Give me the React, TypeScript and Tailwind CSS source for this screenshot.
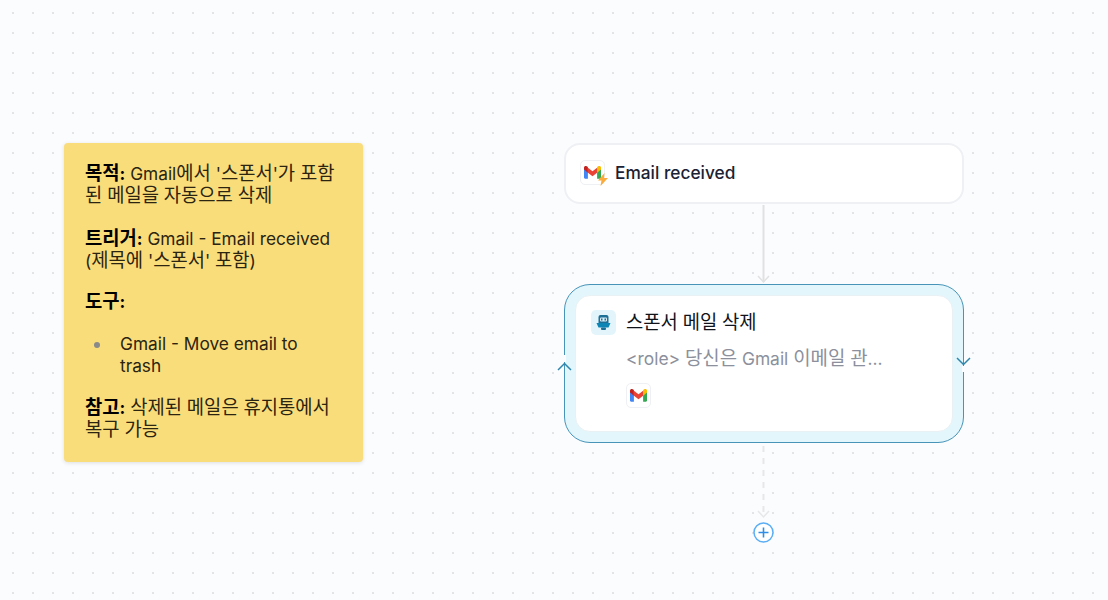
const fontStack = "font-['Inter','Noto_Sans_CJK_KR',sans-serif]";

// hangul runs are set a bit larger so each glyph gets the wider advance seen in the picture
function Ko({ text }: { text: string }) {
  return (
    <>
      {text.split(/([가-힣]+)/).map((part, i) =>
        /[가-힣]/.test(part) ? (
          <span key={i} className="text-[1.085em] leading-none">
            {part}
          </span>
        ) : (
          part
        ),
      )}
    </>
  );
}

function GmailMark({ size = 18 }: { size?: number }) {
  return (
    <svg width={size} height={size * 0.75} viewBox="0 0 24 18">
      <path d="M0 3.5V16.4C0 17.3.7 18 1.6 18H5.5V8.5Z" fill="#4285f4" />
      <path d="M18.5 18H22.4C23.3 18 24 17.3 24 16.4V3.5L18.5 8.5Z" fill="#34a853" />
      <path d="M18.5 1.5V9.5L24 5V2.4C24 .4 21.8-.7 20.2.5Z" fill="#fbbc04" />
      <path d="M5.5 9.5V2.5L12 7.4L18.5 2.5V9.5L12 14.4Z" fill="#ea4335" />
      <path d="M0 2.4V5L5.5 9.5V1.5L3.8.5C2.2-.7 0 .4 0 2.4Z" fill="#c5221f" />
    </svg>
  );
}

function IconBox({ children, tinted }: { children: React.ReactNode; tinted?: boolean }) {
  return (
    <div
      className={
        tinted
          ? "flex h-[25px] w-[25px] shrink-0 items-center justify-center rounded-[5px] bg-[#e3f5fb]"
          : "flex h-[25px] w-[25px] shrink-0 items-center justify-center rounded-[5px] border border-[#eef0f3] bg-white"
      }
    >
      {children}
    </div>
  );
}

function RobotIcon() {
  return (
    <svg width="15" height="17" viewBox="0 0 15 17">
      <rect x="2.5" y="1" width="10" height="10" rx="2" fill="#1d6f96" />
      <rect x="4" y="3.5" width="7" height="4" rx="1" fill="#d9eef6" />
      <rect x="5" y="4.5" width="1.5" height="2" fill="#1d6f96" />
      <rect x="8.5" y="4.5" width="1.5" height="2" fill="#1d6f96" />
      <path d="M0.5 9H14.5L12.5 13.5H2.5Z" fill="#0e86b5" />
      <rect x="5" y="13.5" width="5" height="2.5" rx="1" fill="#1d6f96" />
    </svg>
  );
}

function Chevron({ up }: { up?: boolean }) {
  return (
    <svg width="15" height="9" viewBox="0 0 15 9" fill="none" stroke="#2f86ad" strokeWidth="1.5">
      <path d={up ? "M1 8L7.5 1.5L14 8" : "M1 1L7.5 7.5L14 1"} />
    </svg>
  );
}

function StickyNote() {
  return (
    <div className="absolute left-[64px] top-[143px] h-[319px] w-[299px] rounded-[4px] bg-[#fadd7b] px-[21px] py-[20px] text-[17.3px] leading-[22px] text-[#2a2410] shadow-[0_1px_4px_rgba(0,0,0,0.12)]">
      <p>
        <strong className="font-bold text-black">
          <Ko text="목적:" />
        </strong>{" "}
        <Ko text="Gmail에서 '스폰서'가 포함된 메일을 자동으로 삭제" />
      </p>
      <p className="mt-[21px]">
        <strong className="font-bold text-black">
          <Ko text="트리거:" />
        </strong>{" "}
        <Ko text="Gmail - Email received (제목에 '스폰서' 포함)" />
      </p>
      <p className="mt-[19px]">
        <strong className="font-bold text-black">
          <Ko text="도구:" />
        </strong>
      </p>
      <ul className="mt-[20px] flex flex-col">
        <li className="flex items-start pl-[9px]">
          <span className="mt-[9px] h-[6px] w-[6px] shrink-0 rounded-full bg-[#8a8a8a]" />
          <span className="pl-[20px] pr-[24px]">Gmail - Move email to trash</span>
        </li>
      </ul>
      <p className="mt-[20px]">
        <strong className="font-bold text-black">
          <Ko text="참고:" />
        </strong>{" "}
        <Ko text="삭제된 메일은 휴지통에서 복구 가능" />
      </p>
    </div>
  );
}

function TriggerNode() {
  return (
    <div className="absolute left-[564px] top-[143px] flex h-[61px] w-[400px] items-center gap-[10px] rounded-[16px] border-2 border-[#eef0f4] bg-white pb-[2px] pl-[14px]">
      <div className="relative">
        <IconBox>
          <GmailMark size={17} />
        </IconBox>
        <svg className="absolute -bottom-[1px] -right-[3px]" width="10" height="13" viewBox="0 0 10 13">
          <path d="M6.5 0L0 7.5H3.5L2.5 13L10 5H6Z" fill="#fbab3c" />
        </svg>
      </div>
      <span className="text-[17.3px] font-medium leading-none text-[#1a2233]">Email received</span>
    </div>
  );
}

function AgentNode() {
  return (
    <div className="absolute left-[564px] top-[284px] h-[159px] w-[400px] rounded-[26px] border border-[#4794b8] bg-[#e3f6fc] p-[10px]">
      <div className="h-full rounded-[15px] border border-[#eaf1f4] bg-white pl-[15px] pt-[14px]">
        <div className="flex items-center gap-[10px]">
          <IconBox tinted>
            <RobotIcon />
          </IconBox>
          <span className="pt-[2px] text-[17.3px] leading-none text-[#10131a]">
            <Ko text="스폰서 메일 삭제" />
          </span>
        </div>
        <div className="mt-[12px] pl-[35px] text-[17.4px] leading-[24px] text-[#8b909c]">
          <Ko text="<role> 당신은 Gmail 이메일 관..." />
        </div>
        <div className="mt-[12px] pl-[35px]">
          <IconBox>
            <GmailMark size={17} />
          </IconBox>
        </div>
      </div>
      {/* loop markers sit on the border, with a gap cut out of the line */}
      <div className="absolute left-[-8px] top-[70px] flex flex-col items-center">
        <div className="h-[7px] w-[3px] bg-[#fbfcff]" />
        <Chevron up />
      </div>
      <div className="absolute right-[-8px] top-[72px] flex flex-col items-center">
        <Chevron />
        <div className="h-[6px] w-[3px] bg-[#fbfcff]" />
      </div>
    </div>
  );
}

function Connectors() {
  return (
    <svg className="absolute left-0 top-0" width="1108" height="600" fill="none">
      <path d="M763.5 205V282" stroke="#e0e1e3" strokeWidth="2" />
      <path d="M758 276L763.5 282L769 276" stroke="#e0e1e3" strokeWidth="1.5" />
      <path d="M763.5 446V516" stroke="#e6e7e9" strokeWidth="2" strokeDasharray="6 6" />
      <path d="M758 511L763.5 517L769 511" stroke="#e6e7e9" strokeWidth="1.5" />
      <circle cx="763.5" cy="532.5" r="9.5" fill="#fff" stroke="#5aaef5" strokeWidth="1.5" />
      <path d="M758.5 532.5H768.5M763.5 527.5V537.5" stroke="#2f8fe6" strokeWidth="1.6" />
    </svg>
  );
}

export default function App() {
  return (
    <div
      className={`relative h-[600px] w-[1108px] overflow-hidden bg-[#fbfcfe] bg-[radial-gradient(circle,#e2e4e8_0.8px,transparent_1.2px)] bg-[size:20px_20px] bg-[position:3px_3px] ${fontStack}`}
    >
      <Connectors />
      <StickyNote />
      <TriggerNode />
      <AgentNode />
    </div>
  );
}
